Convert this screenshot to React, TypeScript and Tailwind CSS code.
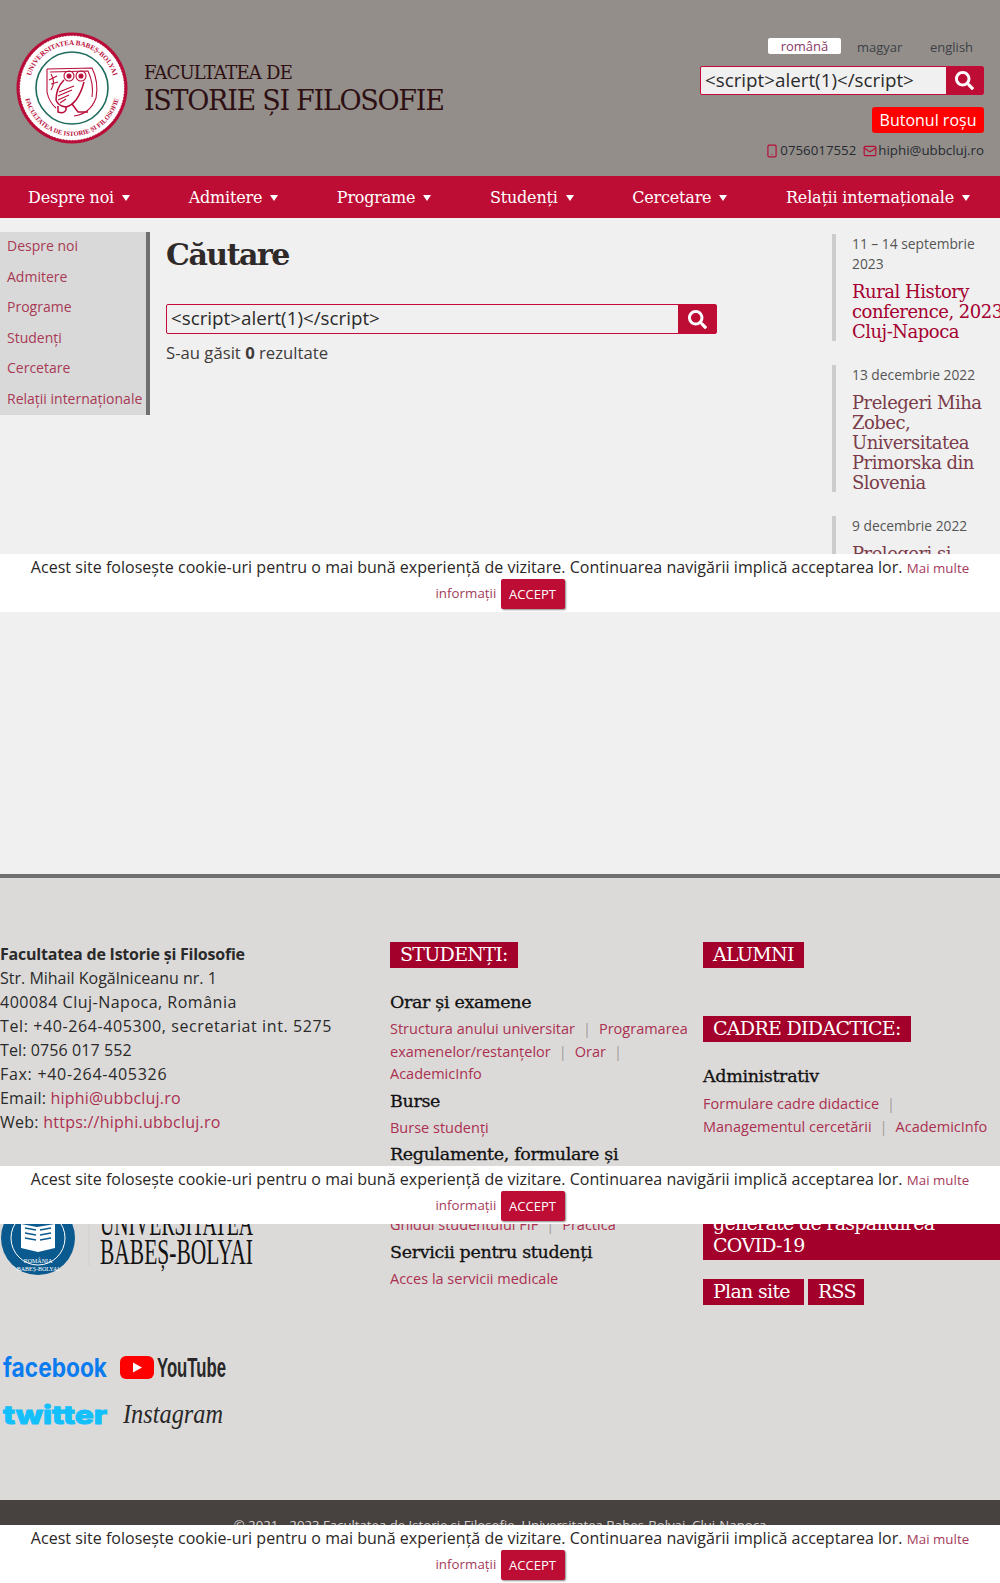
import React from "react";
import { Smartphone, Mail } from "lucide-react";
import { FaSearch } from "react-icons/fa";

const navItems = ["Despre noi", "Admitere", "Programe", "Studenți", "Cercetare", "Relații internaționale"];

const CookieBar = ({ top }: { top: string }) => {
    return (
        <div className={`absolute left-0 w-full h-[58px] bg-white text-center text-[#2b2726] text-[16px] tracking-[0.03px] leading-[22px] pt-[2px] px-[20px] ${top}`}>
            <span>Acest site folosește cookie-uri pentru o mai bună experiență de vizitare. Continuarea navigării implică acceptarea lor. </span>
            <a className="text-[13.3px] text-[#a53a5a]">Mai multe informații</a>{" "}
            <button className="inline-block align-middle w-[64px] h-[30px] bg-[#be0d35] text-white text-[13px] rounded-[2px] shadow-[1px_1px_2px_#888]">ACCEPT</button>
        </div>
    );
};

const Seal = () => (
    <svg width="112" height="112" viewBox="0 0 112 112">
        <defs>
            <path id="sealTop" d="M 13 56 A 43 43 0 0 1 99 56" />
            <path id="sealBottom" d="M 8 56 A 48 48 0 0 0 104 56" />
        </defs>
        <circle cx="56" cy="56" r="55.5" fill="#b80d38" />
        <circle cx="56" cy="56" r="52.5" fill="#fff" stroke="#b80d38" strokeWidth="1" strokeDasharray="1.5 1.5" />
        <text fontSize="7" fontWeight="700" fill="#b80d38" fontFamily="'Liberation Serif',serif">
            <textPath href="#sealTop" startOffset="50%" textAnchor="middle">UNIVERSITATEA BABEȘ-BOLYAI</textPath>
        </text>
        <text fontSize="6.6" fontWeight="700" fill="#b80d38" fontFamily="'Liberation Serif',serif">
            <textPath href="#sealBottom" startOffset="50%" textAnchor="middle">FACULTATEA DE ISTORIE ȘI FILOSOFIE</textPath>
        </text>
        <circle cx="56" cy="56" r="36" fill="#fff" stroke="#1c6b5c" strokeWidth="1.6" />
        <g fill="none" stroke="#b80d38" strokeWidth="1.1">
            <path d="M31 37 L76 36 Q83 50 80 66 Q74 82 58 84" />
            <path d="M31 37 L31 60 Q33 70 40 76" />
            <path d="M34 40 L72 39 Q78 52 76 65" />
            <path d="M35 42 Q40 50 35 58 M33 48 L41 44 M35 52 L42 50" />
            <circle cx="53" cy="44" r="5" />
            <circle cx="53" cy="44" r="2" fill="#b80d38" />
            <circle cx="65" cy="44" r="5" />
            <circle cx="65" cy="44" r="2" fill="#b80d38" />
            <path d="M48 48 Q40 56 40 68 Q42 74 50 75 Q62 72 68 50" strokeWidth="1.5" />
            <path d="M43 60 L58 54 M42 64 L56 58 M42 68 L53 63 M44 71 L50 67" />
            <path d="M42 74 L42 80 Q48 82 50 78 L50 74 M56 72 L62 80 L72 80" strokeWidth="1.5" />
        </g>
    </svg>
);

const UbbLogo = () => (
    <svg width="256" height="66" viewBox="0 0 256 66" className="block">
        <circle cx="38" cy="28" r="37" fill="#0a5a8f" />
        <circle cx="38" cy="28" r="27" fill="none" stroke="#fff" strokeWidth="1" />
        <path d="M21 14 L37 17 L55 14 L55 38 L38 42 L21 38 Z" fill="#fff" />
        <path d="M25 18 L36 20 M25 23 L36 25 M25 28 L36 30 M40 20 L51 18 M40 25 L51 23 M40 30 L51 28" stroke="#0a5a8f" strokeWidth="1.4" />
        <text x="38" y="53" fontSize="6" fill="#fff" textAnchor="middle" fontFamily="'Liberation Serif',serif">ROMÂNIA</text>
        <text x="38" y="61" fontSize="6" fill="#fff" textAnchor="middle" fontFamily="'Liberation Serif',serif">BABEȘ-BOLYAI</text>
        <line x1="89" y1="0" x2="89" y2="56" stroke="#d2d0cf" />
        <text x="100" y="25" fontSize="36" fill="#111" textLength="153" lengthAdjust="spacingAndGlyphs" fontFamily="'Liberation Serif',serif">UNIVERSITATEA</text>
        <text x="100" y="54" fontSize="36" fill="#111" textLength="153" lengthAdjust="spacingAndGlyphs" fontFamily="'Liberation Serif',serif">BABEȘ-BOLYAI</text>
    </svg>
);

const SocialLogos = () => (
    <div className="grid grid-cols-[120px_auto] w-[240px] gap-y-[17px] mt-[78px]">
        <svg width="110" height="28" viewBox="0 0 110 28">
            <text x="3" y="23" fontSize="26" fontWeight="700" fill="#0a7cf0" textLength="104" lengthAdjust="spacingAndGlyphs" fontFamily="Inter,sans-serif">facebook</text>
        </svg>
        <svg width="110" height="28" viewBox="0 0 110 28">
            <rect x="0" y="2" width="34" height="23" rx="6" fill="#ff0000" />
            <path d="M13 8.5 L22 13.5 L13 18.5 Z" fill="#fff" />
            <text x="37" y="23" fontSize="28" fill="#282828" textLength="69" lengthAdjust="spacingAndGlyphs" fontWeight="700" fontFamily="'Liberation Sans',sans-serif">YouTube</text>
        </svg>
        <svg width="110" height="30" viewBox="0 0 110 30">
            <text x="3" y="25" fontSize="26" fontWeight="800" fill="#13c0fb" stroke="#13c0fb" strokeWidth="1" textLength="104" lengthAdjust="spacingAndGlyphs" fontFamily="Inter,sans-serif">twitter</text>
        </svg>
        <svg width="110" height="34" viewBox="0 0 110 34">
            <text x="3" y="24" fontSize="28" fontStyle="italic" fill="#282828" textLength="100" lengthAdjust="spacingAndGlyphs" fontFamily="'Liberation Serif',serif">Instagram</text>
        </svg>
    </div>
);

const Badge = ({ children, className = "" }: { children: React.ReactNode; className?: string }) => (
    <div className={`inline-block h-[26px] px-[10px] bg-[#a3002b] text-white text-[19px] leading-[25px] font-['DejaVu_Serif',serif] tracking-[-0.7px] whitespace-nowrap ${className}`}>{children}</div>
);

const FooterTitle = ({ children }: { children: React.ReactNode }) => (
    <h4 className="text-[#111] text-[17.5px] leading-[24px] font-['DejaVu_Serif',serif] tracking-[-0.35px] [-webkit-text-stroke:0.3px_#111]">{children}</h4>
);

const Sep = () => <span className="mx-[8px] text-[#a09a98]">|</span>;

const FooterLink = ({ children }: { children: React.ReactNode }) => (
    <a className="text-[#ab3050]">{children}</a>
);

const App = () => {
    return (
        <div className="relative w-[1000px] h-[1583px] overflow-hidden bg-[#f0f0f0] font-['Open_Sans',sans-serif]">
            <header className="h-[176px] bg-[#938e8a] flex justify-between pl-[16px] pr-[16px]">
                <div className="flex items-center gap-[16px]">
                    <Seal />
                    <div className="text-[#2e0f12] font-['DejaVu_Serif',serif] mt-[6px]">
                        <div className="text-[18px] leading-[20px] tracking-[-0.75px]">FACULTATEA DE</div>
                        <div className="text-[27px] leading-[36px] tracking-[-1.3px]">ISTORIE ȘI FILOSOFIE</div>
                    </div>
                </div>
                <div className="flex flex-col items-end pt-[38px]">
                    <div className="flex items-center h-[16px] text-[13px] leading-[18px] text-[#3d4146] pr-[10px]">
                        <span className="w-[73px] h-[16px] bg-white rounded-[2px] text-center leading-[17px] text-[#8a3a68]">română</span>
                        <span className="ml-[16px] w-[45px] pt-[1px]">magyar</span>
                        <span className="ml-[28px] w-[44px] pt-[1px]">english</span>
                    </div>
                    <div className="flex w-[284px] h-[29px] mt-[12px] bg-[#f0f0f0] border border-[#c5093a] rounded-[2px]">
                        <div className="flex-1 pl-[4px] text-[18.8px] leading-[26px] text-[#2a2a2a] whitespace-nowrap">&lt;script&gt;alert(1)&lt;/script&gt;</div>
                        <div className="w-[37px] bg-[#be0d35] flex items-center justify-center">
                            <FaSearch size={19} className="text-white" />
                        </div>
                    </div>
                    <div className="mt-[12px] w-[112px] h-[26px] bg-[#ff0000] rounded-[3px] text-white text-center text-[16px] leading-[26px]">Butonul roșu</div>
                    <div className="flex items-center h-[20px] mt-[8px] text-[13.3px] text-[#262a30]">
                        <Smartphone size={14} className="text-[#b80d38]" />
                        <span className="ml-[1px]">0756017552</span>
                        <Mail size={14} className="text-[#b80d38] ml-[7px]" />
                        <span className="ml-[1px]">hiphi@ubbcluj.ro</span>
                    </div>
                </div>
            </header>

            <nav className="h-[42px] pt-[2px] bg-[#be0d35] flex items-center justify-between pl-[28px] pr-[30px] text-white font-['DejaVu_Serif',serif] text-[16px] tracking-[-0.2px]">
                {navItems.map((item) => (
                    <div key={item} className="flex items-center gap-[8px] whitespace-nowrap">
                        {item}
                        <span className="w-0 h-0 border-x-[4px] border-x-transparent border-t-[6px] border-t-white"></span>
                    </div>
                ))}
            </nav>

            <main className="h-[656px] flex items-start">
                <ul className="mt-[14px] w-[150px] h-[183px] shrink-0 bg-[#d9d9d9] border-r-[4px] border-[#707070] pl-[7px] text-[14px] text-[#a83a55] whitespace-nowrap">
                    {navItems.map((item) => (
                        <li key={item} className="h-[30.5px] leading-[28.5px]">{item}</li>
                    ))}
                </ul>
                <section className="w-[551px] ml-[16px] mt-[15px]">
                    <h1 className="text-[30px] leading-[44px] font-bold text-[#2f2a29] font-['DejaVu_Serif',serif] tracking-[-1.5px]">Căutare</h1>
                    <div className="flex h-[30px] mt-[27px] bg-[#f0f0f0] border border-[#c5093a] rounded-[2px]">
                        <div className="flex-1 pl-[4px] text-[18.8px] leading-[27px] text-[#2a2a2a]">&lt;script&gt;alert(1)&lt;/script&gt;</div>
                        <div className="w-[38px] bg-[#be0d35] flex items-center justify-center">
                            <FaSearch size={19} className="text-white" />
                        </div>
                    </div>
                    <p className="mt-[7px] text-[16.7px] leading-[24px] text-[#403b3a]">S-au găsit <b>0</b> rezultate</p>
                </section>
                <aside className="ml-[115px] mt-[16px] w-[168px] h-[340px] overflow-hidden flex flex-col gap-[24px] shrink-0">
                    <div className="shrink-0 border-l-[4px] border-[#cccccc] pl-[16px] h-[107px]">
                        <div className="text-[13.8px] leading-[20px] text-[#555]">11 – 14 septembrie 2023</div>
                        <div className="mt-[8px] w-[160px] font-['DejaVu_Serif',serif] text-[18px] leading-[20px] text-[#a50030] tracking-[-0.5px] whitespace-nowrap">Rural History<br />conference, 2023<br />Cluj-Napoca</div>
                    </div>
                    <div className="shrink-0 border-l-[4px] border-[#cccccc] pl-[16px] h-[127px]">
                        <div className="text-[13.8px] leading-[20px] text-[#555]">13 decembrie 2022</div>
                        <div className="mt-[8px] font-['DejaVu_Serif',serif] text-[18px] leading-[20px] text-[#7b3c4a] tracking-[-0.5px] whitespace-nowrap">Prelegeri Miha<br />Zobec,<br />Universitatea<br />Primorska din<br />Slovenia</div>
                    </div>
                    <div className="shrink-0 border-l-[4px] border-[#cccccc] pl-[16px] h-[80px]">
                        <div className="text-[13.8px] leading-[20px] text-[#555]">9 decembrie 2022</div>
                        <div className="mt-[8px] font-['DejaVu_Serif',serif] text-[18px] leading-[20px] text-[#7b3c4a] tracking-[-0.5px]">Prelegeri și</div>
                    </div>
                </aside>
            </main>

            <footer className="h-[626px] bg-[#dcdad9] border-t-[4px] border-[#6f6f6f] grid grid-cols-[390px_313px_297px] pt-[64px]">
                <div>
                    <div className="text-[16px] leading-[24px] text-[#2a2a2a] whitespace-nowrap">
                        <b className="tracking-[-0.22px]">Facultatea de Istorie și Filosofie</b><br />
                        Str. Mihail Kogălniceanu nr. 1<br />
                        <span className="tracking-[0.5px]">400084 Cluj-Napoca, România</span><br />
                        <span className="tracking-[0.6px]">Tel: +40-264-405300, secretariat int. 5275</span><br />
                        <span className="tracking-[0.1px]">Tel: 0756 017 552</span><br />
                        <span className="tracking-[0.7px]">Fax: +40-264-405326</span><br />
                        <span className="tracking-[0.2px]">Email: <a className="text-[#ab3050]">hiphi@ubbcluj.ro</a></span><br />
                        <span className="tracking-[0.25px]">Web: <a className="text-[#ab3050]">https://hiphi.ubbcluj.ro</a></span>
                    </div>
                    <div className="mt-[76px]"><UbbLogo /></div>
                    <SocialLogos />
                </div>
                <div className="text-[14.5px] leading-[22.5px] pr-[8px]">
                    <Badge>STUDENȚI:</Badge>
                    <div className="mt-[22px]"><FooterTitle>Orar și examene</FooterTitle></div>
                    <p className="mt-[4px]">
                        <FooterLink>Structura anului universitar</FooterLink><Sep /><FooterLink>Programarea</FooterLink><br />
                        <FooterLink>examenelor/restanțelor</FooterLink><Sep /><FooterLink>Orar</FooterLink><Sep /><br />
                        <FooterLink>AcademicInfo</FooterLink>
                    </p>
                    <div className="mt-[3px]"><FooterTitle>Burse</FooterTitle></div>
                    <p className="mt-[4px]"><FooterLink>Burse studenți</FooterLink></p>
                    <div className="mt-[3px] h-[72px]"><FooterTitle>Regulamente, formulare și<br />ghiduri</FooterTitle></div>
                    <p><FooterLink>Ghidul studentului FIF</FooterLink><Sep /><FooterLink>Practica</FooterLink></p>
                    <div className="mt-[3px]"><FooterTitle>Servicii pentru studenți</FooterTitle></div>
                    <p className="mt-[4px]"><FooterLink>Acces la servicii medicale</FooterLink></p>
                </div>
                <div className="text-[14.5px] leading-[22.5px]">
                    <Badge>ALUMNI</Badge>
                    <div className="mt-[48px]"><Badge>CADRE DIDACTICE:</Badge></div>
                    <div className="mt-[22px]"><FooterTitle>Administrativ</FooterTitle></div>
                    <p className="mt-[5px]">
                        <FooterLink>Formulare cadre didactice</FooterLink><Sep /><br /><FooterLink>Managementul cercetării</FooterLink><Sep /><FooterLink>AcademicInfo</FooterLink>
                    </p>
                    <div className="mt-[30px] h-[92px] flex flex-col justify-end bg-[#a3002b] px-[10px] pb-[4px] text-white font-['DejaVu_Serif',serif] text-[19px] leading-[22px] tracking-[-0.7px]">
                        generate de răspândirea<br />COVID-19
                    </div>
                    <div className="flex gap-[4px] mt-[19px]">
                        <Badge className="w-[101px]">Plan site</Badge>
                        <Badge className="w-[56px] text-center">RSS</Badge>
                    </div>
                </div>
            </footer>

            <div className="h-[83px] bg-[#474140] text-center text-[13.2px] text-[#d8d5d4] pt-[16px]">
                © 2021 - 2023 Facultatea de Istorie și Filosofie, Universitatea Babeș-Bolyai, Cluj-Napoca
            </div>

            <CookieBar top="top-[554px]" />
            <CookieBar top="top-[1166px]" />
            <CookieBar top="top-[1525px]" />
        </div>
    );
};

export default App;
